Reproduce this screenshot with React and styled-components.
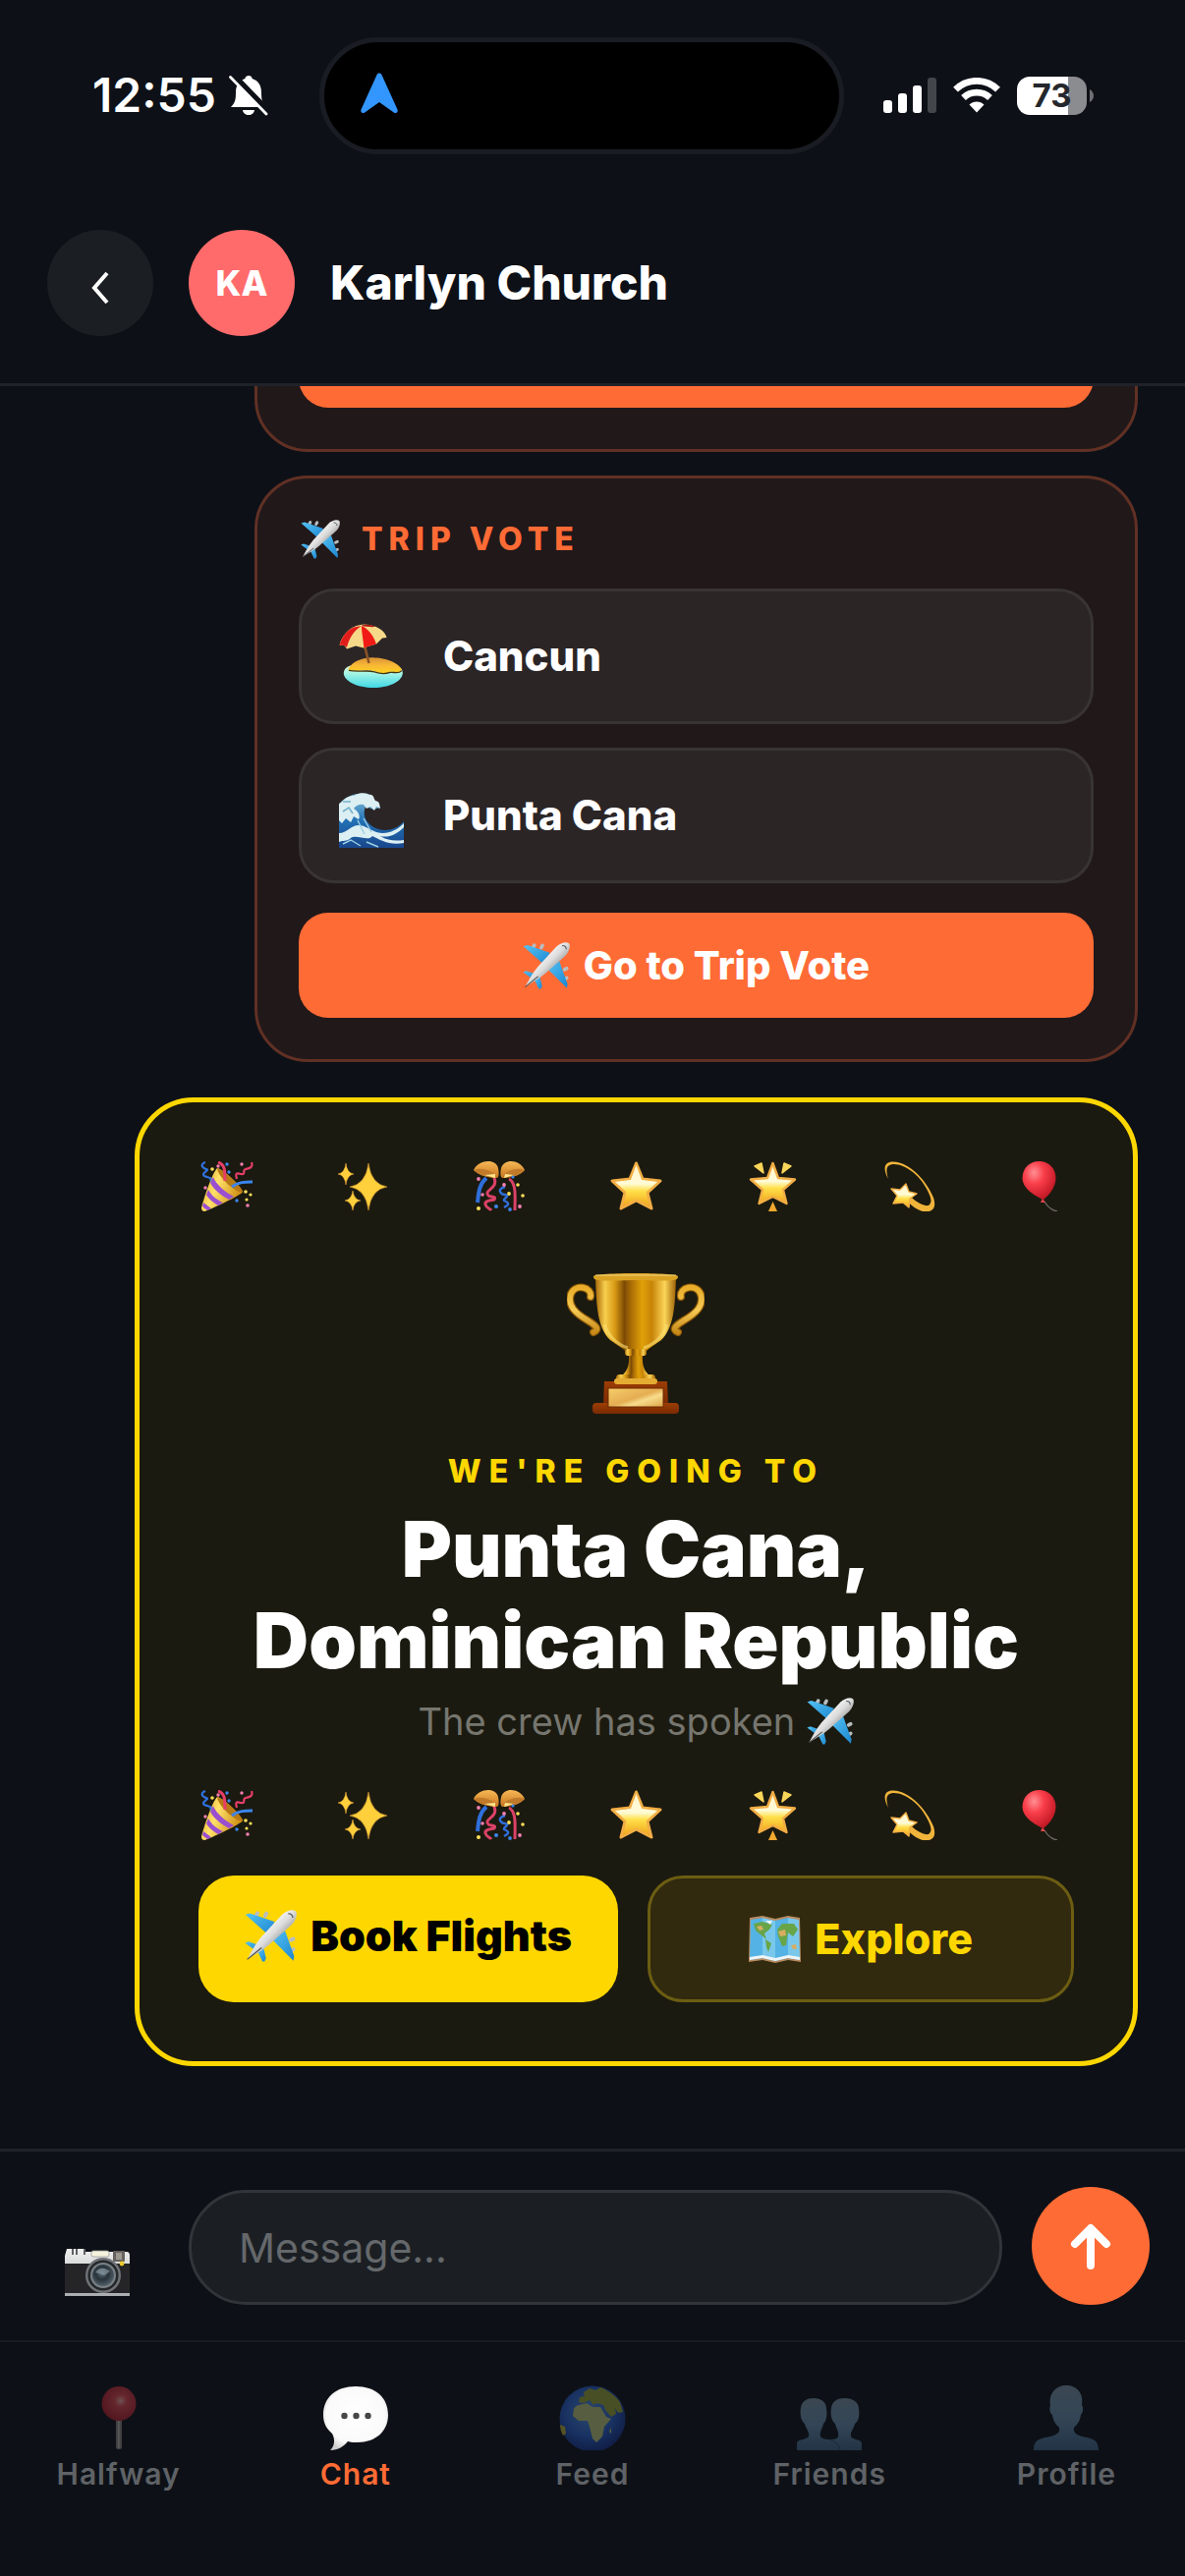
import React from "react";
import styled, { createGlobalStyle } from "styled-components";

const Global = createGlobalStyle`
  *, *::before, *::after { box-sizing: border-box; }
  body {
    margin: 0;
    background: #0d1117;
    font-family: Inter, "Liberation Sans", sans-serif;
    color: #fff;
  }
  button, input { font-family: inherit; }
  button { border: 0; padding: 0; margin: 0; cursor: pointer; }
  svg { display: block; flex: none; }
`;

const Page = styled.div`
  height: 100vh;
  display: flex;
  flex-direction: column;
  background: #0d1117;
  overflow: hidden;
`;

/* ---------- status bar ---------- */

const StatusBar = styled.div`
  flex: none;
  height: 194px;
  display: flex;
  align-items: center;
  gap: 40px;
  padding: 0 93px 0 94px;
`;

const Clock = styled.div`
  flex: 1;
  display: flex;
  align-items: center;
  gap: 13px;
`;

const Indicators = styled.div`
  display: flex;
  align-items: center;
  gap: 17px;
`;

const Time = styled.span`
  font-size: 48px;
  line-height: 56px;
  font-weight: 600;
`;

const Island = styled.div`
  flex: none;
  width: 534px;
  height: 119px;
  border: 5px solid #191c22;
  border-radius: 60px;
  background: #000;
  display: flex;
  align-items: center;
  padding-left: 36px;
`;

const Battery = styled.span`
  width: 71px;
  height: 39px;
  border-radius: 13px;
  background: linear-gradient(90deg, #fff 73%, #8b8c8f 73%);
  color: #24272c;
  font-size: 33px;
  line-height: 39px;
  font-weight: 700;
  text-align: center;
`;

const BatteryGroup = styled.span`
  display: flex;
  align-items: center;
  gap: 3px;
`;

/* ---------- header ---------- */

const Header = styled.header`
  flex: none;
  display: flex;
  align-items: center;
  gap: 36px;
  padding: 40px 48px 48px;
  border-bottom: 3px solid #1f2329;
`;

const BackButton = styled.button`
  width: 108px;
  height: 108px;
  border-radius: 50%;
  background: #1b1f23;
  display: flex;
  align-items: center;
  justify-content: center;
`;

const Avatar = styled.div`
  width: 108px;
  height: 108px;
  border-radius: 50%;
  background: #ff6b6b;
  font-size: 35px;
  line-height: 108px;
  font-weight: 800;
  text-align: center;
`;

const Name = styled.h1`
  margin: 0;
  font-size: 48px;
  line-height: 56px;
  font-weight: 800;
`;

/* ---------- messages ---------- */

const Messages = styled.main`
  flex: 1;
  min-height: 0;
  overflow: hidden;
  display: flex;
  flex-direction: column;
  justify-content: flex-end;
  align-items: flex-end;
  gap: 24px;
  padding: 0 48px 84px;
`;

const VoteCard = styled.section`
  flex: none;
  width: 81%;
  display: flex;
  flex-direction: column;
  gap: 30px;
  padding: 42px;
  border: 3px solid #613024;
  border-radius: 54px;
  background: #211819;
`;

const VoteTitle = styled.h2`
  margin: 0;
  display: flex;
  align-items: center;
  gap: 22px;
  padding-left: 2px;
  color: #ff6b35;
  font-size: 32px;
  line-height: 40px;
  font-weight: 800;
  letter-spacing: 6px;
`;

const Options = styled.div`
  display: flex;
  flex-direction: column;
  gap: 24px;
`;

const Option = styled.button`
  height: 138px;
  display: flex;
  align-items: center;
  gap: 40px;
  padding: 0 38px;
  border: 3px solid #393434;
  border-radius: 36px;
  background: #2b2526;
  color: #fff;
  font-size: 42px;
  line-height: 48px;
  font-weight: 800;
`;

const VoteButton = styled.button`
  height: 107px;
  display: flex;
  align-items: center;
  justify-content: center;
  gap: 14px;
  border-radius: 30px;
  background: #ff6b35;
  color: #fff;
  font-size: 40px;
  line-height: 48px;
  font-weight: 800;
`;

const WinnerCard = styled.section`
  flex: none;
  width: 92%;
  margin-top: 12px;
  padding: 60px;
  border: 5px solid #ffd700;
  border-radius: 60px;
  background: #1b1a10;
  display: flex;
  flex-direction: column;
  text-align: center;
`;

const Confetti = styled.div`
  display: flex;
  justify-content: space-between;
`;

const TrophyBox = styled.div`
  display: flex;
  justify-content: center;
  margin: 63px 0 39px;
`;

const Eyebrow = styled.p`
  margin: 0 0 12px;
  color: #ffd700;
  font-size: 32px;
  line-height: 40px;
  font-weight: 800;
  letter-spacing: 8px;
`;

const Destination = styled.h2`
  margin: 0 0 12px;
  font-size: 78px;
  line-height: 93px;
  font-weight: 900;
`;

const Spoken = styled.p`
  margin: 0 0 46px;
  display: flex;
  align-items: center;
  justify-content: center;
  gap: 12px;
  color: #76766f;
  font-size: 38px;
  line-height: 48px;
`;

const Actions = styled.div`
  display: flex;
  gap: 30px;
  margin-top: 36px;
`;

const Action = styled.button`
  box-sizing: content-box;
  flex: 1 1 0;
  display: flex;
  align-items: flex-start;
  justify-content: center;
  gap: 14px;
  padding: 35px 0;
  border: ${(p) => (p.$outlined ? "3px solid #6c5d12" : "0")};
  border-radius: 36px;
  background: ${(p) => (p.$outlined ? "#312a0e" : "#ffd700")};
  color: ${(p) => (p.$outlined ? "#ffd700" : "#000")};
  font-size: 43px;
  line-height: 53px;
  font-weight: ${(p) => (p.$outlined ? 800 : 900)};
`;

/* ---------- composer ---------- */

const Composer = styled.form`
  flex: none;
  display: flex;
  align-items: flex-end;
  gap: 30px;
  padding: 36px;
  border-top: 3px solid #1f2329;
`;

const CameraButton = styled.button`
  width: 126px;
  height: 66px;
  background: transparent;
  display: flex;
  align-items: center;
  justify-content: center;
`;

const MessageInput = styled.input`
  flex: 1;
  min-width: 0;
  height: 117px;
  padding: 0 48px;
  border: 3px solid #313539;
  border-radius: 59px;
  background: #1b1f23;
  color: #fff;
  font-size: 41px;
  outline: none;
  &::placeholder { color: #65686b; opacity: 1; }
`;

const SendButton = styled.button`
  width: 120px;
  height: 120px;
  border-radius: 50%;
  background: #ff6b35;
  display: flex;
  align-items: center;
  justify-content: center;
`;

/* ---------- tab bar ---------- */

const TabBar = styled.nav`
  flex: none;
  display: flex;
  padding: 44px 0 86px;
  border-top: 2px solid #191d23;
`;

const Tab = styled.a`
  flex: 1;
  display: flex;
  flex-direction: column;
  align-items: center;
  gap: 6px;
  color: ${(p) => (p.$active ? "#ff6b35" : "#5f6266")};
  font-size: 30px;
  line-height: 36px;
  font-weight: 600;
  letter-spacing: 1px;
  text-decoration: none;
  svg { opacity: ${(p) => (p.$active ? 1 : 0.4)}; }
`;

/* ---------- drawings ---------- */

const HiddenSvg = styled.svg`
  position: absolute;
`;

const Stops = ({ list }) =>
  list.map(([o, c]) => <stop key={o} offset={o} stopColor={c} />);

const Gradients = () => (
  <HiddenSvg width="0" height="0" aria-hidden="true">
    <defs>
      <linearGradient id="wing" x1="0" y1="0" x2="1" y2="1">
        <Stops list={[[0, "#55c3f5"], [1, "#1c86cf"]]} />
      </linearGradient>
      <linearGradient id="hull" x1="0" y1="0" x2="1" y2="1">
        <Stops list={[[0.3, "#ffffff"], [0.5, "#dcdcdc"], [0.7, "#8d8d8f"]]} />
      </linearGradient>
      <linearGradient id="star" x1="0" y1="0" x2="0" y2="1">
        <Stops list={[[0, "#fff6d0"], [0.45, "#fffbd6"], [0.62, "#ffe04a"], [1, "#f0a41c"]]} />
      </linearGradient>
      <linearGradient id="cup" x1="0" y1="0" x2="1" y2="0">
        <Stops list={[[0, "#a86a08"], [0.12, "#f7cf4e"], [0.24, "#d99a15"], [0.36, "#7c4a04"], [0.44, "#a96c05"], [0.58, "#e0a008"], [0.7, "#c78408"], [0.86, "#fbd458"], [1, "#9d6206"]]} />
      </linearGradient>
      <linearGradient id="handle" x1="0" y1="0" x2="0" y2="1">
        <Stops list={[[0, "#e9ad2a"], [0.5, "#f5ca55"], [1, "#c98a18"]]} />
      </linearGradient>
      <linearGradient id="wood" x1="0" y1="0" x2="0" y2="1">
        <Stops list={[[0, "#9c3d05"], [1, "#7a2a02"]]} />
      </linearGradient>
      <linearGradient id="plate" x1="0" y1="0" x2="1" y2="1">
        <Stops list={[[0, "#f6cf69"], [0.5, "#e5ad52"], [0.65, "#f7dc8c"], [1, "#dda548"]]} />
      </linearGradient>
      <linearGradient id="cone" x1="0" y1="0" x2="1" y2="0.4">
        <Stops list={[[0, "#e3a61d"], [0.45, "#ffe16a"], [1, "#cf9017"]]} />
      </linearGradient>
      <radialGradient id="balloon" cx="0.35" cy="0.3" r="0.75">
        <Stops list={[[0, "#ff8f93"], [0.4, "#f93e4a"], [1, "#bd1522"]]} />
      </radialGradient>
      <radialGradient id="pinHead" cx="0.55" cy="0.42" r="0.6">
        <Stops list={[[0, "#ffb0b0"], [0.3, "#e8474f"], [1, "#b81d2b"]]} />
      </radialGradient>
      <linearGradient id="ball" x1="0" y1="0" x2="0" y2="1">
        <Stops list={[[0, "#f7b856"], [1, "#c9771f"]]} />
      </linearGradient>
      <linearGradient id="sand" x1="0" y1="0" x2="0" y2="1">
        <Stops list={[[0, "#d89236"], [0.45, "#f7b637"], [1, "#ffd21f"]]} />
      </linearGradient>
      <linearGradient id="lagoon" x1="0" y1="0" x2="0" y2="1">
        <Stops list={[[0, "#f2efcf"], [0.4, "#a9f5e4"], [1, "#3fd8e6"]]} />
      </linearGradient>
      <linearGradient id="sea" x1="0" y1="0" x2="0" y2="1">
        <Stops list={[[0, "#8cc7dd"], [0.5, "#2271b5"], [1, "#18468c"]]} />
      </linearGradient>
      <radialGradient id="bubble" cx="0.5" cy="0.45" r="0.58">
        <Stops list={[[0, "#ffffff"], [0.78, "#fafafa"], [1, "#cfcfcf"]]} />
      </radialGradient>
      <radialGradient id="ocean" cx="0.45" cy="0.4" r="0.62">
        <Stops list={[[0, "#5b9bf0"], [0.6, "#2a62d2"], [1, "#15318a"]]} />
      </radialGradient>
      <linearGradient id="person" x1="0" y1="0" x2="0" y2="1">
        <Stops list={[[0, "#8099ac"], [0.5, "#6d94b4"], [1, "#41688c"]]} />
      </linearGradient>
      <linearGradient id="metal" x1="0" y1="0" x2="0" y2="1">
        <Stops list={[[0, "#f1f1f0"], [1, "#a9acae"]]} />
      </linearGradient>
      <radialGradient id="lens" cx="0.45" cy="0.4" r="0.6">
        <Stops list={[[0, "#5c6f7c"], [0.5, "#27323a"], [1, "#54616a"]]} />
      </radialGradient>
    </defs>
  </HiddenSvg>
);

const Plane = ({ size }) => (
  <svg width={size} height={size} viewBox="0 0 40 40" aria-hidden="true">
    <g fill="#b9bdc1">
      <rect x="8" y="0.8" width="3" height="5" rx="1.4" transform="rotate(28 9 3)" />
      <rect x="15" y="1" width="3" height="5" rx="1.4" transform="rotate(28 16 3)" />
      <rect x="34" y="21.5" width="5" height="3" rx="1.4" transform="rotate(-28 36 23)" />
      <rect x="34" y="29.5" width="5" height="3" rx="1.4" transform="rotate(-28 36 31)" />
    </g>
    <path d="M0.5 3.5 L4 2.6 L23 9 L18 19 Z" fill="url(#wing)" />
    <path d="M37.4 39 L38 35.5 L31 16 L20.5 22 Z" fill="url(#wing)" />
    <path d="M0.3 25.4 L3 24.4 L11 27 L8.5 31.4 Z" fill="url(#wing)" />
    <path d="M15.4 39.6 L16.4 37 L14.6 29.4 L9.8 31.6 L13.6 39.6 Z" fill="url(#wing)" />
    <path d="M39.2 1 C37 -0.8 32 0.4 28.6 3.8 L13 20.6 C9 25.2 5.6 31 2.2 37.6 C8.4 34.2 15 30 19 26.6 L36 11.6 C39.6 8 40.8 3 39.2 1 Z" fill="url(#hull)" />
    <path d="M13 29 L2 38" stroke="#4d4f52" strokeWidth="0.9" />
    <path d="M33.4 3 C35.4 2.6 36.8 3.8 37 6" fill="none" stroke="#5b6269" strokeWidth="1" />
  </svg>
);

const BeachIsland = () => (
  <svg width="66" height="66" viewBox="0 0 66 66" aria-hidden="true">
    <path d="M7 45 C14 38 52 38 63 45 C70 54 56 65 35 65 C14 65 -1 54 7 45 Z" fill="url(#lagoon)" />
    <path d="M9.5 46 C14 38 24 34 36 34.4 C50 34.4 62 41 64 47 C60 52 56 48 52 49 C45 52 42 50 36 48 C26 46 20 49 9.5 47 Z" fill="url(#sand)" />
    <path d="M10 47.4 C20 49.6 27 46.6 36 48.8 C42 51 46 51.6 52 49.4 C56 48.6 60 51.6 64 47.6" fill="none" stroke="#453513" strokeWidth="1.3" />
    <path d="M26 22 L30.5 40" stroke="#8b5427" strokeWidth="2.6" />
    <path d="M0.5 21.6 C4 7 18 -2 31 1 C41 3 47 8 48.6 14 L44 14.4 L38 20.6 L31 22.4 L25 24.4 L17 22.6 L8 25.6 L5.4 22 Z" fill="#f6d988" />
    <path d="M15 3.6 C7 7 3 14 0.5 21.6 L5.4 22 L8 24 C10 15 15 7 23 2 Z" fill="#e01d1b" />
    <path d="M23 2 C23 9 25 18 25.4 24.4 L31 22.4 L38 20.6 C35 12 30 5 23 2 Z" fill="#f01a16" />
    <path d="M23 2 C25 0 33 0.6 37 3 C34 3.4 28 3 23 2 Z" fill="#a91311" />
  </svg>
);

const Wave = () => (
  <svg width="66" height="66" viewBox="0 0 66 66" aria-hidden="true">
    <path d="M0 66 L0 22 C5 14 18 9 30 11 L36 18 L42 25 L35 27 L27 24 C23 33 28 43 40 47 C52 50 61 45 66 39 L66 66 Z" fill="url(#sea)" />
    <path d="M0 29 L0 21 C5 18 8 12 16 13 C20 9 27 10 30 12 C36 11 35 16 37 18 C42 19 41 22 42 26 L38 24 L36 28 L32 24 L28 26 L25 22 C21 21 17 23 15 26 C20 29 22 34 20 37 L15 34 L12 40 L7 36 L3 41 L0 38 Z" fill="#dceff2" />
    <path d="M4 29 L10 25 L14 31 M4 19 L12 19" stroke="#75b2cd" strokeWidth="1.6" fill="none" />
    <path d="M0 51 C8 51 12 43 20 43 C26 43 28 46 38 50 C48 53 58 49 66 41 L66 45 C58 53 50 56 42 54 C50 59 58 59 66 58 L66 61 C52 64 42 58 34 54 C30 60 18 52 12 56 C8 60 4 58 0 60 Z" fill="#dceff2" />
    <path d="M19 38 L26 52 M25 36 L33 50 M4 62 L12 58 L22 64 M28 60 L40 65" stroke="#9dcfe3" strokeWidth="1.4" fill="none" />
  </svg>
);

const Popper = () => (
  <svg width="57" height="51" viewBox="0 0 57 51" aria-hidden="true">
    <path d="M19 7 C25 8 42 24 45 31 C45 34 10 50 6 51 C3 51 3 48 3 47 C6 36 14 12 19 7 Z" fill="url(#cone)" />
    <path d="M19 7 C28 10 43 25 45 31 C40 34 20 17 19 7 Z" fill="#b87a14" />
    <path d="M15 16 C18 24 28 32 36 36 L31 39 C23 35 15 28 12 22 Z M10 29 C14 36 20 40 25 42 L20 45 C15 42 10 38 8 34 Z M5 42 L13 48 L9 50 L4 46 Z" fill="#9a4fd0" />
    <path d="M7 1 C1 3 4 7 8 8 C12 9 2 12 6 15 C10 17 14 16 12 20" fill="none" stroke="#2f72e0" strokeWidth="2.2" />
    <path d="M20 1 C27 3 27 10 27 20" fill="none" stroke="#e63e68" strokeWidth="3" />
    <path d="M54 1 C56 7 51 7 48 8 C44 9 49 14 43 13 C37 11 38 14 39 18" fill="none" stroke="#e63e68" strokeWidth="2.2" />
    <path d="M34 26 C40 21 48 21 55 21" fill="none" stroke="#3a86ee" strokeWidth="3" />
    <g fill="#ffe15a"><circle cx="14" cy="8" r="1.8" /><circle cx="48" cy="31" r="1.8" /><circle cx="49" cy="39" r="1.6" /><circle cx="53" cy="34" r="1.6" /></g>
    <g fill="#f57fb1"><circle cx="20" cy="5" r="1.7" /><circle cx="44" cy="3" r="1.7" /><circle cx="7" cy="27" r="1.7" /><circle cx="50" cy="45" r="1.8" /></g>
    <g fill="#3a86ee"><circle cx="29" cy="3" r="1.7" /><circle cx="31" cy="11" r="1.7" /><circle cx="39" cy="40" r="1.7" /></g>
  </svg>
);

const spark = (x, y, rx, ry) => {
  const a = rx * 0.14;
  return `M${x} ${y - ry} Q${x + a} ${y - a} ${x + rx} ${y} Q${x + a} ${y + a} ${x} ${y + ry} Q${x - a} ${y + a} ${x - rx} ${y} Q${x - a} ${y - a} ${x} ${y - ry}Z`;
};

const Sparkles = () => (
  <svg width="57" height="51" viewBox="0 0 57 51" aria-hidden="true">
    <g fill="#ffcf3c" stroke="#e9a536" strokeWidth="0.5">
      <path d={spark(34, 26, 19, 24)} />
      <path d={spark(11, 13, 8, 11)} />
      <path d={spark(18, 40, 8, 10)} />
    </g>
  </svg>
);

const ConfettiBall = () => (
  <svg width="57" height="51" viewBox="0 0 57 51" aria-hidden="true">
    <path d="M15 17 C7 24 7 34 6 42" fill="none" stroke="#2f6fdc" strokeWidth="4" />
    <path d="M22 15 C28 26 17 28 16 32 C15 38 26 34 23 39 C19 40 13 40 14 44 C15 48 19 48 20 50" fill="none" stroke="#dc4267" strokeWidth="3" />
    <path d="M34 26 C24 29 31 34 34 34 C40 36 32 37 33 40 C38 42 39 44 33 47" fill="none" stroke="#2f6fdc" strokeWidth="2.4" />
    <path d="M38 18 C46 22 44 38 44 50" fill="none" stroke="#dc4267" strokeWidth="3" />
    <path d="M2 9 C7 -2 25 -3 27 7 C28 12 28 17 25 17 C18 17 8 15 2 9 Z M54 9 C49 -2 33 -3 30 7 C29 12 29 17 32 17 C39 17 49 15 54 9 Z" fill="url(#ball)" />
    <path d="M2 9 C8 6 20 8 26 16 C18 17 8 15 2 9 Z M54 9 C48 6 36 8 31 16 C39 17 48 15 54 9 Z" fill="#c07a2a" />
    <path d="M13 14 L24 13 L24 17 Z M34 13 L43 14 L33 17 Z" fill="#ffe68b" />
    <g fill="#ffe15a"><circle cx="7" cy="48" r="2" /><circle cx="38" cy="33" r="1.9" /><circle cx="52" cy="35" r="1.8" /><circle cx="47" cy="24" r="1.8" /></g>
    <g fill="#f57fb1"><circle cx="7" cy="18" r="1.9" /><circle cx="11" cy="34" r="1.8" /><circle cx="33" cy="24" r="1.9" /><circle cx="49" cy="46" r="1.9" /></g>
    <g fill="#3a86ee"><circle cx="25" cy="46" r="2" /><circle cx="39" cy="49" r="1.9" /><circle cx="42" cy="16" r="1.6" /></g>
  </svg>
);

const Star = () => (
  <svg width="57" height="51" viewBox="0 0 57 51" aria-hidden="true">
    <path d="M28.5 2 L35 18 L53 20 L40 32 L44 48 L28.5 40 L13 48 L17 32 L4 20 L22 18 Z" fill="url(#star)" stroke="#f2ae45" strokeWidth="3" strokeLinejoin="round" />
    <path d="M28.5 4 L34 19 L50 21 L38 31 L42 46 L28.5 38 L15 46 L19 31 L7 21 L23 19 Z" fill="url(#star)" />
  </svg>
);

const GlowStar = () => (
  <svg width="57" height="51" viewBox="0 0 57 51" aria-hidden="true">
    <path d="M28.5 2 L34 17 L51 18.5 L39 29 L42.5 43 L28.5 36 L14.5 43 L18 29 L6 18.5 L23 17 Z" fill="url(#star)" stroke="#f2ae45" strokeWidth="2.4" strokeLinejoin="round" />
    <path d="M10 5 L17 2 L19 12 Z M47 5 L40 2 L38 12 Z" fill="#f9d559" stroke="#f9d559" strokeWidth="1.5" strokeLinejoin="round" />
    <path d="M28.5 41 L33 51 L24 51 Z" fill="#f2a92f" />
  </svg>
);

const Dizzy = () => (
  <svg width="57" height="51" viewBox="0 0 57 51" aria-hidden="true">
    <path d="M7 18 C1 7 3 0.500 12 0.500 C29 1 46 20 53 37 C57 50 50 52 42 51 C36 49 31 46 26 40 L31 37 C36 42 44 46 48 45 C52 42 51 37 46 28 C39 14 24 3 13 3 C5 3 4 8 7 18 Z" fill="#f1b43b" />
    <path d="M25 23 L28 31 L36 33 L29 38 L28 47 L22 42 L12 43 L16 35 L10 28 L19 29 Z" fill="url(#star)" stroke="#f2ae45" strokeWidth="1.4" strokeLinejoin="round" />
  </svg>
);

const Balloon = () => (
  <svg width="57" height="51" viewBox="0 0 57 51" aria-hidden="true">
    <path d="M27 41 C30 46 34 50 40 51" fill="none" stroke="#6d6a64" strokeWidth="1.3" />
    <path d="M21.500 0 C31 0 38.500 7 38.500 17 C38.500 27 31 35 26 39 C18 36 4.500 28 4.500 17 C4.500 7 12 0 21.500 0 Z" fill="url(#balloon)" />
    <path d="M25 38 L28 42 L23 42 Z" fill="#e3434c" />
  </svg>
);

const Trophy = () => (
  <svg width="140" height="143" viewBox="0 0 140 143" aria-hidden="true">
    <g fill="none" strokeLinecap="round">
      <path d="M24 24 C26 14 9 10 4 21 C0 33 9 41 21 48 C29 53 34 57 27 60" stroke="#8d5a08" strokeWidth="8" />
      <path d="M24 24 C26 14 9 10 4 21 C0 33 9 41 21 48 C29 53 34 57 27 60" stroke="url(#handle)" strokeWidth="5.600" />
      <path d="M116 24 C114 14 131 10 136 21 C140 33 131 41 119 48 C111 53 106 57 113 60" stroke="#8d5a08" strokeWidth="8" />
      <path d="M116 24 C114 14 131 10 136 21 C140 33 131 41 119 48 C111 53 106 57 113 60" stroke="url(#handle)" strokeWidth="5.600" />
    </g>
    <path d="M29 4 C30 34 31 55 44 68 C52 74 59 77 61 82 L79 82 C81 77 88 74 96 68 C109 55 110 34 111 4 Z" fill="url(#cup)" />
    <path d="M38 52 C43 67 55 74 62 76 M102 52 C97 67 85 74 78 76" fill="none" stroke="#fce071" strokeWidth="3" opacity="0.6" />
    <path d="M27 3 C28 -1 112 -1 113 3 C113 8 110 8 70 7 C30 8 27 8 27 3 Z" fill="#d9a224" />
    <path d="M29 2 L111 2" stroke="#f6d67c" strokeWidth="1.2" />
    <path d="M63 83 C64 96 60 101 53 107 L87 107 C80 101 76 96 77 83 Z" fill="url(#cup)" />
    <rect x="59" y="77" width="22" height="7" rx="3" fill="url(#cup)" />
    <rect x="50" y="103" width="40" height="7" rx="3.5" fill="url(#cup)" />
    <path d="M38 110 L102 110 L103 134 L37 134 Z" fill="url(#wood)" />
    <rect x="48" y="107" width="44" height="6" rx="3" fill="#e4ac32" />
    <rect x="26" y="132" width="88" height="11" rx="4" fill="url(#wood)" />
    <rect x="42" y="117" width="56" height="19" fill="url(#plate)" stroke="#6d2b05" strokeWidth="1" />
  </svg>
);

const MapIcon = () => (
  <svg width="53" height="53" viewBox="0 0 53 53" aria-hidden="true">
    <path d="M1 5 L14 3 L27 6 L40 3 L52 5 L53 50 L40 48 L27 51 L14 48 L0 50 Z" fill="#b88b62" />
    <path d="M2 7 L14 5 L14 46 L1 48 Z M27 8 L40 5 L40 46 L27 49 Z" fill="#54b3e4" />
    <path d="M14 5 L27 8 L27 49 L14 46 Z M40 5 L51 7 L52 48 L40 46 Z" fill="#79c8ec" />
    <path d="M5 11 L14 9 L24 12 L21 17 L16 21 L18 27 L12 22 L7 18 Z M17 27 L23 31 L20 40 L18 35 Z M29 17 L34 11 L46 11 L50 17 L45 24 L40 20 L38 33 L34 34 L30 24 Z" fill="#68a548" />
    <path d="M8 14 L13 13 L15 17 L11 18 Z M30 19 L37 17 L38 23 L32 24 Z M43 33 L48 32 L49 37 L45 37 Z" fill="#d8ad62" />
    <path d="M17 8 L24 8 L22 12 Z M1 45 L14 43 L27 46 L40 43 L52 45 L52 48 L40 46 L27 49 L14 46 L1 48 Z" fill="#edf5f8" />
  </svg>
);

const Camera = () => (
  <svg width="68" height="48" viewBox="0 0 68 48" aria-hidden="true">
    <path d="M3 0 H22 V3 H64 Q67 3 67 7 V48 H1 V7 Z" fill="url(#metal)" />
    <rect x="1" y="15" width="66" height="30" fill="#252527" />
    <path d="M9 0 V6 M13 0 V6 M21 0 V6" stroke="#3d3e40" strokeWidth="1.6" />
    <rect x="28" y="2" width="18" height="6" rx="2" fill="#f6f3dc" stroke="#97999b" strokeWidth="0.8" />
    <rect x="50" y="2" width="12" height="11" rx="1" fill="#67625f" />
    <rect x="53" y="4" width="6" height="7" fill="#9d9791" />
    <circle cx="59" cy="15" r="2.4" fill="#e9c92c" />
    <circle cx="40" cy="27" r="18" fill="#707478" />
    <circle cx="40" cy="27" r="15.6" fill="#25282b" />
    <circle cx="40" cy="27" r="13" fill="#7a8186" />
    <circle cx="40" cy="27" r="11" fill="url(#lens)" />
    <path d="M32 24 C36 18 43 19 47 23 L41 27 Z" fill="#93a2aa" opacity="0.6" />
  </svg>
);

const Pin = () => (
  <svg width="68" height="66" viewBox="0 0 68 66" aria-hidden="true">
    <rect x="31" y="32" width="6" height="33" rx="2.5" fill="#8f8886" />
    <rect x="33" y="32" width="1.6" height="32" fill="#c9c2bf" />
    <circle cx="34" cy="18.5" r="17.5" fill="url(#pinHead)" />
  </svg>
);

const Bubble = () => (
  <svg width="68" height="66" viewBox="0 0 68 66" aria-hidden="true">
    <path d="M8 66 C13 62 13 54 10 49 C4 44 1 38 1 30 C1 12 14 1 34 1 C54 1 67 12 67 30 C67 47 54 58 36 58 C32 58 29 58 26 57 C22 62 16 66 8 66 Z" fill="url(#bubble)" />
    <g fill="#474747"><circle cx="22.5" cy="31" r="3.2" /><circle cx="34.5" cy="31" r="3.2" /><circle cx="46.5" cy="31" r="3.2" /></g>
  </svg>
);

const Globe = () => (
  <svg width="68" height="66" viewBox="0 0 68 66" aria-hidden="true">
    <circle cx="34" cy="34" r="33.5" fill="url(#ocean)" />
    <path d="M15 24 C17 19 23 20 28 18 L34 22 L42 22 L48 32 L53 34 L46 42 L44 52 L38 58 L34 54 L31 42 L29 36 L20 36 L14 31 Z" fill="#c5cf7e" />
    <path d="M20 17 L21 12 L26 11 L25 7 L31 3 L37 5 L42 2 C50 5 58 11 62 17 L65 27 L60 28 L57 23 L58 29 L53 32 L47 25 L45 20 L38 18 L35 20 L31 15 L25 18 Z" fill="#a1ac3c" />
    <path d="M1 40 L6 42 L7 49 L4 51 C2 47 1 44 1 40 Z" fill="#c2b33c" />
    <path d="M51 47 L53 43 L53 49 Z" fill="#c5cf7e" />
  </svg>
);

const Friends = () => (
  <svg width="68" height="66" viewBox="0 0 68 66" aria-hidden="true">
    <path d="M1 66 V59 C2 54 10 56 13 52 C14 47 10 44 9 39 C5 36 4 29 5 23 C6 16 11 13 18 13 C26 13 31 17 31 24 C32 31 31 36 28 39 C27 44 24 47 25 52 C27 55 32 55 34 55 C37 55 42 55 43 52 C44 47 41 44 40 39 C36 36 35 29 36 23 C37 16 42 13 50 13 C58 13 64 17 64 24 C65 31 64 36 60 39 C59 44 55 47 56 52 C58 56 66 54 67 59 V66 Z" fill="url(#person)" />
    <path d="M34 55 C41 57 44 60 45 66" fill="none" stroke="#34597c" strokeWidth="1.2" />
  </svg>
);

const Person = () => (
  <svg width="68" height="66" viewBox="0 0 68 66" aria-hidden="true">
    <path d="M1 66 C1 54 9 54 18 52 C25 50 28 48 27 43 C24 40 21 37 20 30 C17 28 17 23 18 20 C16 8 24 0 34 0 C45 0 52 8 50 20 C52 23 51 28 49 30 C48 37 45 40 42 43 C41 48 44 50 50 52 C59 54 67 54 67 66 Z" fill="url(#person)" />
  </svg>
);

const BellOff = () => (
  <svg width="40" height="42" viewBox="0 0 40 42" aria-hidden="true">
    <path d="M20 1 C22 1 23.5 2.4 23.6 4 C30 6 33 11 33 18 C33 26 34 29 38 33 L2 33 C6 29 7 26 7 18 C7 11 10 6 16.4 4 C16.5 2.4 18 1 20 1 Z M14 36 H26 C25.5 39.5 23 41 20 41 C17 41 14.500 39.5 14 36 Z" fill="#fff" />
    <path d="M4.500 0.5 L40 37" stroke="#0d1117" strokeWidth="6" />
    <path d="M1.500 2.500 L38 40" stroke="#fff" strokeWidth="2.800" strokeLinecap="round" />
  </svg>
);

const Arrow = () => (
  <svg width="40" height="46" viewBox="0 0 40 46" aria-hidden="true">
    <path d="M17.600 2 C18.500 0 21.500 0 22.400 2 L38.500 37.500 C39.500 40.500 37 42 34.800 40.500 L20 30 L5.200 40.500 C3 42 0.500 40.500 1.500 37.500 Z" fill="#3396ff" />
  </svg>
);

const Signal = () => (
  <svg width="54" height="36" viewBox="0 0 54 36" aria-hidden="true">
    <g fill="#fff">
      <rect x="0" y="23" width="9" height="13" rx="3" />
      <rect x="15" y="16" width="9" height="20" rx="3" />
      <rect x="30" y="8" width="9" height="28" rx="3" />
    </g>
    <rect x="45" y="0" width="9" height="36" rx="3" fill="#43464b" />
  </svg>
);

const Wifi = () => (
  <svg width="48" height="36" viewBox="0 0 48 36" aria-hidden="true">
    <g fill="none" stroke="#fff" strokeWidth="6.800">
      <path d="M2.500 12.200 A30.500 30.500 0 0 1 45.500 12.200" />
      <path d="M10.500 20.500 A19.500 19.500 0 0 1 37.500 20.500" />
    </g>
    <path d="M24 35.500 L16.500 27.600 A10.600 10.600 0 0 1 31.500 27.600 Z" fill="#fff" />
  </svg>
);

const TABS = [
  ["Halfway", Pin],
  ["Chat", Bubble],
  ["Feed", Globe],
  ["Friends", Friends],
  ["Profile", Person],
];

const ConfettiRow = () => (
  <Confetti>
    <Popper />
    <Sparkles />
    <ConfettiBall />
    <Star />
    <GlowStar />
    <Dizzy />
    <Balloon />
  </Confetti>
);

export default function App() {
  return (
    <Page>
      <Global />
      <Gradients />

      <StatusBar>
        <Clock>
          <Time>12:55</Time>
          <BellOff />
        </Clock>
        <Island>
          <Arrow />
        </Island>
        <Indicators>
          <Signal />
          <Wifi />
          <BatteryGroup>
            <Battery>73</Battery>
            <svg width="4" height="13" viewBox="0 0 4 13" aria-hidden="true">
              <path d="M0 0 Q4 2.500 4 6.500 T0 13 Z" fill="#6d6f72" />
            </svg>
          </BatteryGroup>
        </Indicators>
      </StatusBar>

      <Header>
        <BackButton type="button" aria-label="Back">
          <svg width="60" height="60" viewBox="0 0 60 60" aria-hidden="true">
            <path d="M37 20 L24 35 L37 50" fill="none" stroke="#fff" strokeWidth="4" />
          </svg>
        </BackButton>
        <Avatar>KA</Avatar>
        <Name>Karlyn Church</Name>
      </Header>

      <Messages>
        <VoteCard>
          <VoteButton type="button" aria-label="Go to Trip Vote" />
        </VoteCard>

        <VoteCard>
          <VoteTitle>
            <Plane size={40} />
            TRIP VOTE
          </VoteTitle>
          <Options>
            <Option type="button">
              <BeachIsland />
              Cancun
            </Option>
            <Option type="button">
              <Wave />
              Punta Cana
            </Option>
          </Options>
          <VoteButton type="button">
            <Plane size={48} />
            Go to Trip Vote
          </VoteButton>
        </VoteCard>

        <WinnerCard>
          <ConfettiRow />
          <TrophyBox>
            <Trophy />
          </TrophyBox>
          <Eyebrow>WE'RE GOING TO</Eyebrow>
          <Destination>
            Punta Cana,
            <br />
            Dominican Republic
          </Destination>
          <Spoken>
            The crew has spoken
            <Plane size={48} />
          </Spoken>
          <ConfettiRow />
          <Actions>
            <Action type="button">
              <Plane size={53} />
              Book Flights
            </Action>
            <Action type="button" $outlined>
              <MapIcon />
              Explore
            </Action>
          </Actions>
        </WinnerCard>
      </Messages>

      <Composer onSubmit={(e) => e.preventDefault()}>
        <CameraButton type="button" aria-label="Add photo">
          <Camera />
        </CameraButton>
        <MessageInput type="text" placeholder="Message..." aria-label="Message" />
        <SendButton type="submit" aria-label="Send">
          <svg width="60" height="60" viewBox="0 0 60 60" aria-hidden="true">
            <path d="M30 50 V13 M14 28 L30 12 L46 28" fill="none" stroke="#fff" strokeWidth="8" strokeLinecap="round" strokeLinejoin="round" />
          </svg>
        </SendButton>
      </Composer>

      <TabBar>
        {TABS.map(([label, Icon]) => (
          <Tab key={label} href={`#${label.toLowerCase()}`} $active={label === "Chat"}>
            <Icon />
            {label}
          </Tab>
        ))}
      </TabBar>
    </Page>
  );
}
